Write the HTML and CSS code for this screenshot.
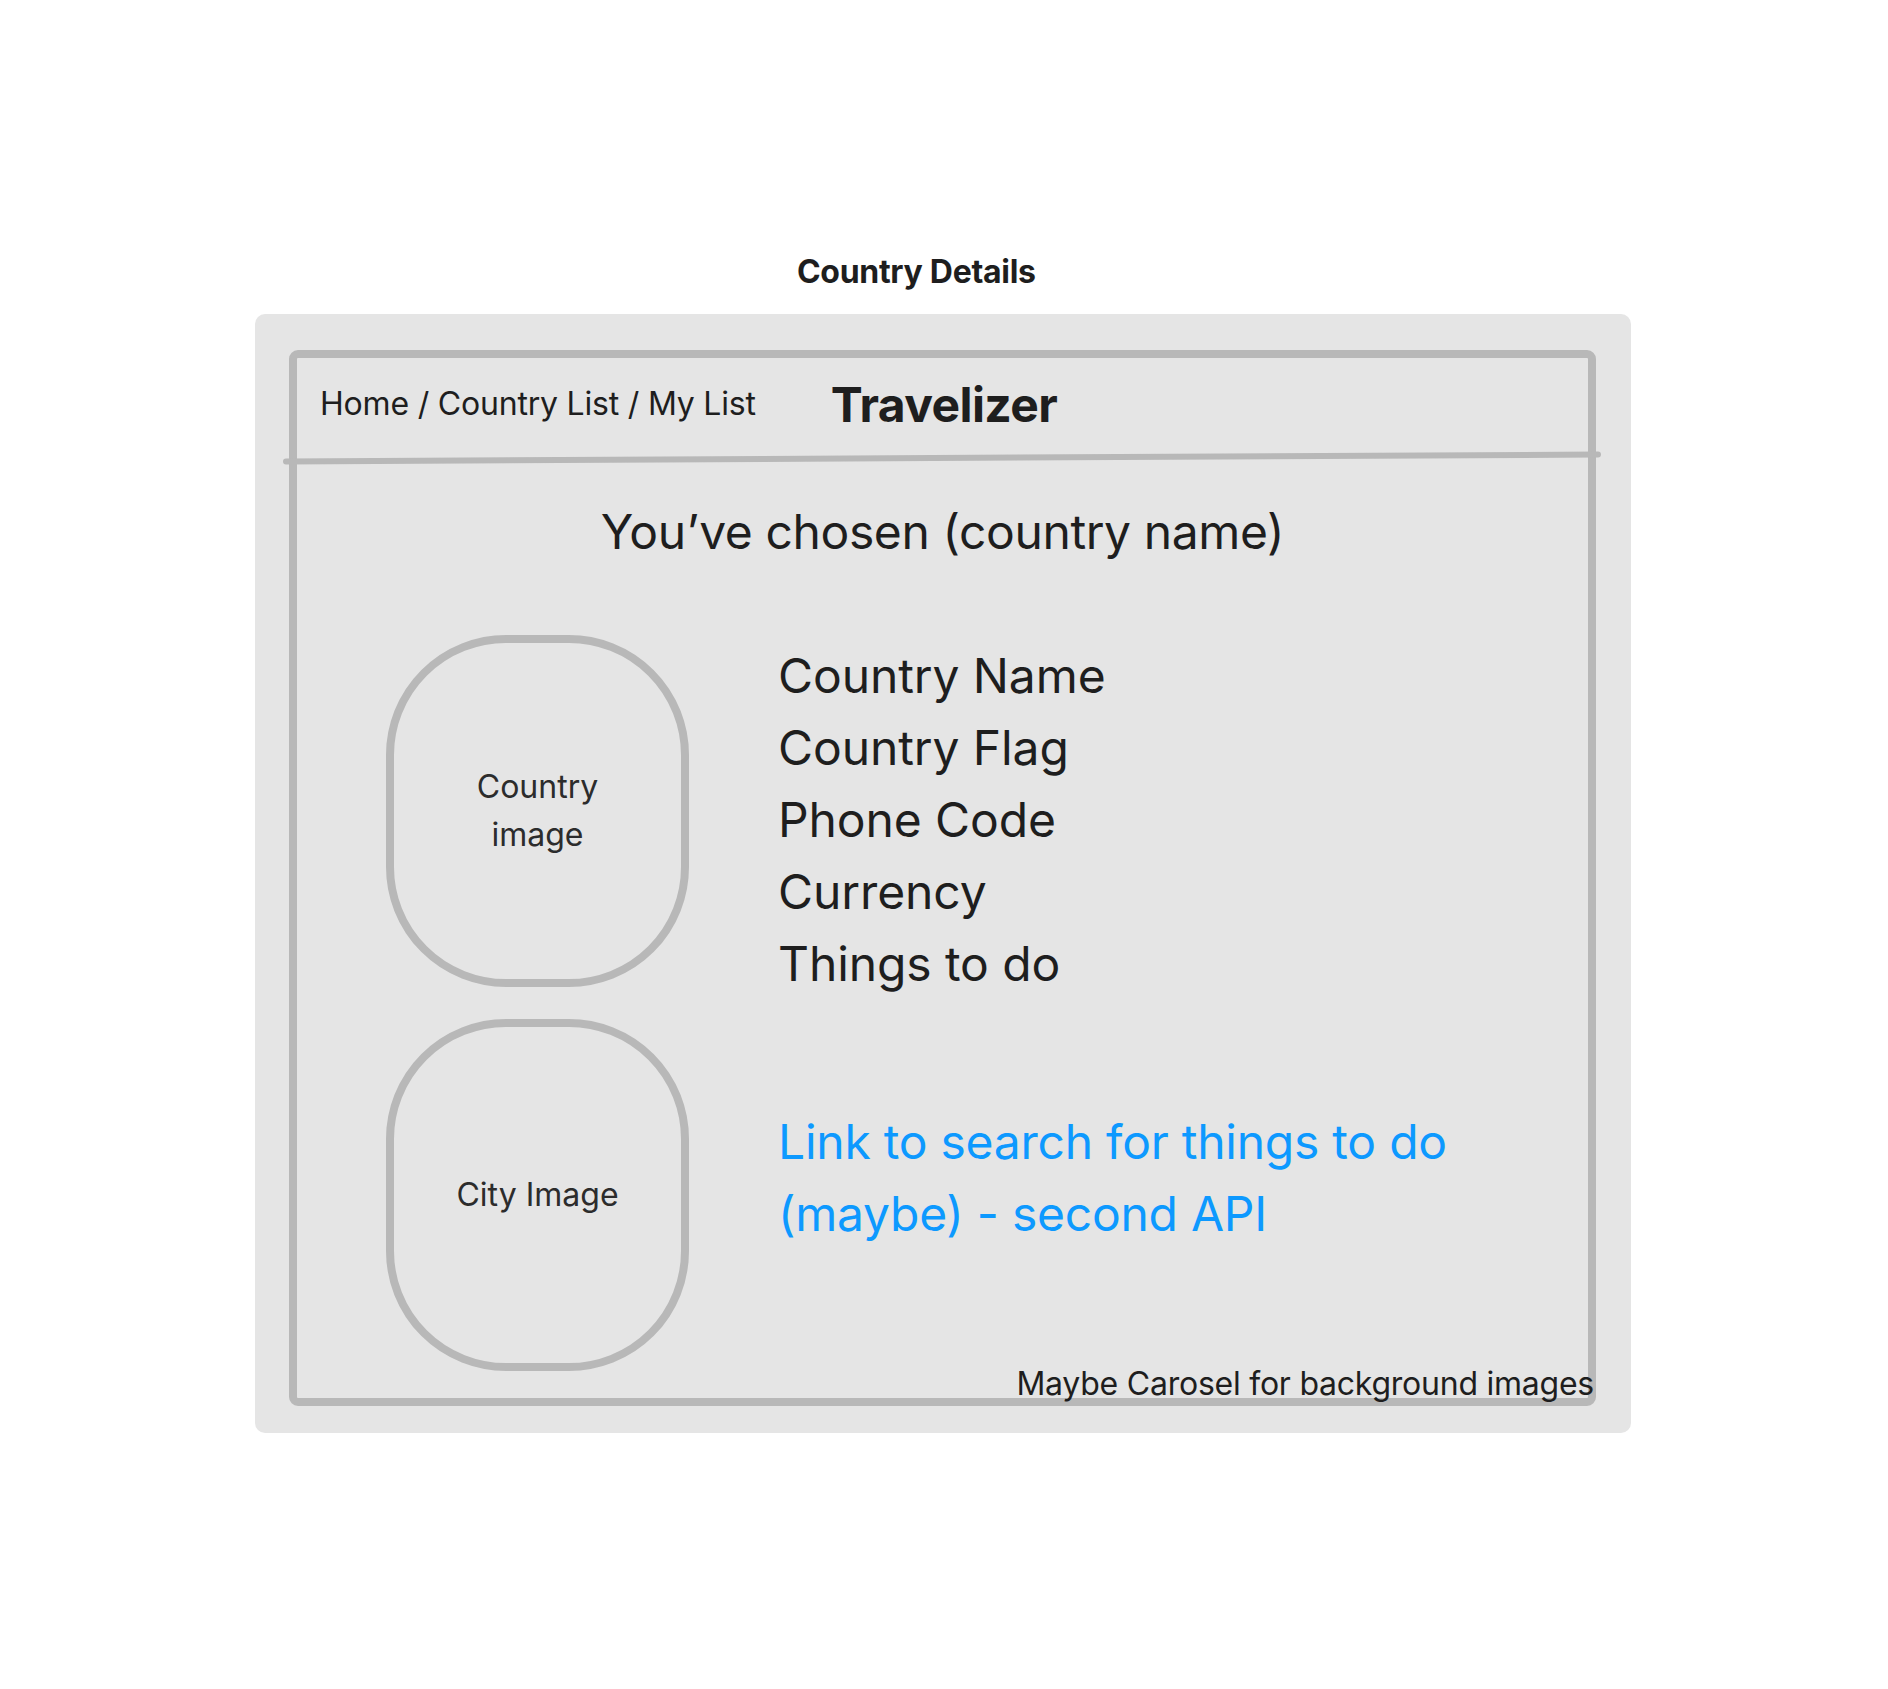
FILE: index.html
```html
<!DOCTYPE html>
<html lang="en">
<head>
<meta charset="utf-8">
<title>Country Details</title>
<link rel="stylesheet" href="styles.css">
</head>
<body>
<main class="canvas">
  <h1 class="frame-label">Country Details</h1>
  <section class="panel">
    <div class="frame">
      <header class="topbar">
        <nav class="crumbs">Home / Country List / My List</nav>
        <div class="brand">Travelizer</div>
      </header>
      <div class="divider"></div>
      <h2 class="chosen">You’ve chosen (country name)</h2>
      <div class="content">
        <div class="pills">
          <div class="pill">Country<br>image</div>
          <div class="pill">City Image</div>
        </div>
        <div class="info">
          <ul class="facts">
            <li>Country Name</li>
            <li>Country Flag</li>
            <li>Phone Code</li>
            <li>Currency</li>
            <li>Things to do</li>
          </ul>
          <a class="search-link" href="#">Link to search for things to do (maybe) - second API</a>
        </div>
      </div>
      <p class="note">Maybe Carosel for background images</p>
    </div>
  </section>
</main>
</body>
</html>
```

FILE: styles.css
```css
html, body {
  margin: 0;
  padding: 0;
  background: #ffffff;
}

body {
  font-family: "Inter", "Noto Sans", "Liberation Sans", sans-serif;
  color: #1e1e1e;
}

.canvas {
  padding: 252px 0 0 255px;
  min-height: 1689px;
  box-sizing: border-box;
}

.frame-label {
  margin: 0 0 23px 542px;
  font-size: 32px;
  font-weight: 700;
  line-height: 39px;
  letter-spacing: -0.3px;
  color: #1e1e1e;
}

.panel {
  width: 1376px;
  height: 1119px;
  box-sizing: border-box;
  padding: 36px 35px 27px 34px;
  background: #e5e5e5;
  border-radius: 10px;
  display: flex;
}

.frame {
  position: relative;
  flex: 1;
  border: 8px solid #b8b8b8;
  border-radius: 9px;
  display: flex;
  flex-direction: column;
}

.topbar {
  display: flex;
  align-items: flex-start;
  gap: 75px;
  padding: 16px 0 0 23px;
}

.crumbs {
  margin-top: 10px;
  font-size: 32px;
  line-height: 39px;
  letter-spacing: -0.2px;
  color: #1e1e1e;
}

.brand {
  margin-top: 2px;
  font-size: 48px;
  font-weight: 700;
  line-height: 58px;
  letter-spacing: -0.6px;
  color: #1e1e1e;
}

.divider {
  height: 6px;
  margin: 21px -13px 0 -14px;
  background: #b8b8b8;
  border-radius: 3px;
  transform: rotate(-0.305deg);
}

.chosen {
  margin: 42px 0 0;
  font-size: 48px;
  font-weight: 400;
  line-height: 58px;
  letter-spacing: -0.4px;
  text-align: center;
}

.content {
  display: flex;
  gap: 89px;
  margin-top: 74px;
  padding-left: 89px;
}

.pills {
  display: flex;
  flex-direction: column;
  gap: 32px;
}

.pill {
  width: 303px;
  height: 352px;
  box-sizing: border-box;
  border: 8px solid #b8b8b8;
  border-radius: 120px;
  display: flex;
  align-items: center;
  justify-content: center;
  text-align: center;
  font-size: 32px;
  line-height: 48px;
  color: #2c2c2c;
}

.info {
  padding-top: 5px;
  width: 700px;
}

.facts {
  list-style: none;
  margin: 0;
  padding: 0;
  font-size: 48px;
  line-height: 72px;
  letter-spacing: -0.1px;
}

.search-link {
  display: block;
  margin-top: 106px;
  font-size: 48px;
  line-height: 72px;
  letter-spacing: -0.25px;
  color: #0d99ff;
  text-decoration: none;
}

.note {
  position: absolute;
  right: -6px;
  bottom: -5px;
  margin: 0;
  font-size: 32px;
  line-height: 39px;
  letter-spacing: -0.24px;
  color: #1e1e1e;
  white-space: nowrap;
}
```
